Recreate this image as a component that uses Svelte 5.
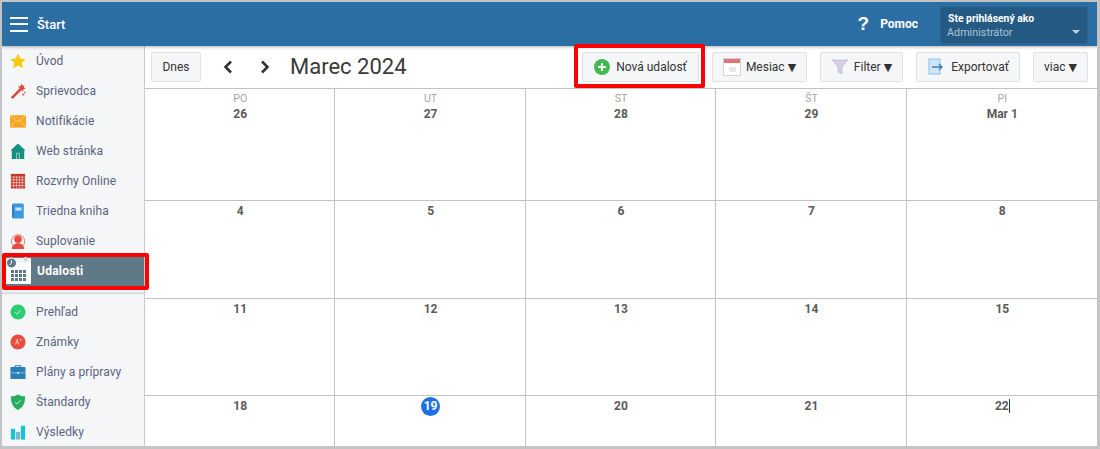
<script>
  const top = [
    { name: 'Úvod', icon: 'star' }, { name: 'Sprievodca', icon: 'wand' }, { name: 'Notifikácie', icon: 'mail' },
    { name: 'Web stránka', icon: 'home' }, { name: 'Rozvrhy Online', icon: 'table' }, { name: 'Triedna kniha', icon: 'book' },
    { name: 'Suplovanie', icon: 'person' }
  ];
  const bottom = [
    { name: 'Prehľad', icon: 'check' }, { name: 'Známky', icon: 'grade' }, { name: 'Plány a prípravy', icon: 'case' },
    { name: 'Štandardy', icon: 'shield' }, { name: 'Výsledky', icon: 'bars' }
  ];
  const days = ['PO', 'UT', 'ST', 'ŠT', 'PI'];
  const weeks = [
    ['26', '27', '28', '29', 'Mar 1'], ['4', '5', '6', '7', '8'],
    ['11', '12', '13', '14', '15'], ['18', '19', '20', '21', '22']
  ];
</script>

{#snippet icon(n)}
  <svg class="ico" viewBox="1 1 18 18" aria-hidden="true">
    {#if n === 'star'}
      <path d="M10 1.500l2.600 5.700 6.100.7-4.500 4.200 1.200 6.100L10 15.200 4.600 18.200l1.200-6.100L1.300 7.900l6.100-.7z" fill="#f6c90e"/>
    {:else if n === 'wand'}
      <path d="M2 17l9.500-9.500 2 2L4 19z" fill="#d9433b"/>
      <path d="M14 1.500l1 2.500 2.500-.5-1 2.500 2 1.500-2.500.5-.5 2.500-2-1.500-2.500.5.700-2.500-1.700-2h2.500z" fill="#e8413a"/>
      <rect x="15" y="13" width="2" height="2" fill="#e8413a"/><rect x="17" y="11" width="1.500" height="1.500" fill="#e8413a"/>
    {:else if n === 'mail'}
      <rect x="1" y="3.500" width="18" height="14" fill="#f5a623"/><path d="M1 3.500l9 7.500 9-7.500M1 17.500l6.500-8.500M19 17.500l-6.500-8.500" fill="none" stroke="#fbd48a" stroke-width="1"/>
    {:else if n === 'home'}
      <path d="M10 1.500l8.500 8H17V19H3V9.500H1.500z" fill="#14917e"/><rect x="8" y="12" width="4" height="7" fill="#9fd4ca"/><rect x="9" y="13" width="2" height="6" fill="#14917e"/>
    {:else if n === 'table'}
      <rect x="2" y="2" width="16" height="16.500" fill="#c0392b"/>
      <path d="M5.200 5v13.500M8.400 5v13.500M11.600 5v13.500M14.800 5v13.500M2 5.500h16M2 8.700h16M2 11.900h16M2 15.100h16" stroke="#f3c9c4" stroke-width=".8"/>
    {:else if n === 'book'}
      <rect x="3.500" y="1.500" width="13" height="17" rx="1.500" fill="#3f97dc"/><rect x="7" y="6" width="7" height="3.500" fill="#c7e2f7"/><rect x="3.500" y="3" width="1.500" height="14" fill="#2272b5"/>
    {:else if n === 'person'}
      <path d="M4 15A7.500 7.500 0 1 1 16 15" fill="none" stroke="#e8685d" stroke-width="1"/><circle cx="10" cy="8" r="4.300" fill="#e74c3c"/><path d="M3 19c0-4 3-6.500 7-6.500s7 2.500 7 6.500z" fill="#e74c3c"/>
    {:else if n === 'check'}
      <circle cx="10" cy="10" r="8.500" fill="#2ecc71"/><path d="M6.800 10.200l2.200 2.200 4-4.400" fill="none" stroke="#c9f3da" stroke-width="1"/>
    {:else if n === 'grade'}
      <circle cx="10" cy="10" r="8.500" fill="#e74c3c"/><path d="M7 13l2-6 2 6M8 11h2M12 7.500h2M13 6.500v2" fill="none" stroke="#f8d2ce" stroke-width=".9"/>
    {:else if n === 'case'}
      <rect x="1.500" y="4.500" width="17" height="13.500" rx="1" fill="#2980b9"/><path d="M7 4.500V3h6v1.500" fill="none" stroke="#2980b9" stroke-width="1.200"/><rect x="1.500" y="10.500" width="17" height="1" fill="#8ec0e0"/><rect x="9" y="10" width="2" height="2" fill="#d5e9f6"/>
    {:else if n === 'shield'}
      <path d="M10 1.500c2.500 1.500 5 2 8 2 0 7-1.500 12-8 15.500C3.500 15.500 2 10.500 2 3.500c3 0 5.500-.5 8-2z" fill="#27ae60"/><path d="M6.800 10l2.200 2.200 4-4.200" fill="none" stroke="#d6f5e3" stroke-width="1"/>
    {:else if n === 'bars'}
      <rect x="2" y="6.500" width="4.800" height="12" fill="#16c2d5"/><rect x="7.600" y="10" width="4.800" height="8.500" fill="#7fb6c9"/><rect x="13.200" y="3" width="4.800" height="15.500" fill="#16c2d5"/>
    {/if}
  </svg>
{/snippet}

<div class="page">
  <header class="topbar">
    <div class="brand">
      <span class="burger"><i></i><i></i><i></i></span>
      <span class="start">Štart</span>
    </div>
    <div class="help"><span class="q">?</span><span>Pomoc</span></div>
    <div class="user">
      <div class="u1">Ste prihlásený ako</div>
      <div class="u2">Administrátor</div>
      <span class="caret"></span>
    </div>
  </header>

  <div class="body">
    <nav class="side">
      <ul class="group">
        {#each top as it}
          <li class="item">{@render icon(it.icon)}<span>{it.name}</span></li>
        {/each}
      </ul>
      <div class="item active">
        <svg class="cal" viewBox="0 0 25 28" aria-hidden="true">
          <rect x="0" y="2" width="25" height="26" fill="#fff"/>
          <rect x="0" y="2" width="25" height="5" fill="#eef0f1"/>
          <rect x="18" y="0" width="3" height="5" rx="1" fill="#c9d2d6"/>
          <g fill="#5f7a86">
            {#each [0, 1, 2, 3] as c}
              {#each [0, 1, 2] as r}
                <rect x={5 + c * 4} y={14 + r * 4} width="3" height="3"/>
              {/each}
            {/each}
          </g>
          <circle cx="5.500" cy="7" r="5" fill="#5f7a86" stroke="#fff" stroke-width="1"/>
          <path d="M5.500 4v3l-2 2" fill="none" stroke="#fff" stroke-width=".9"/>
        </svg>
        <span>Udalosti</span>
      </div>
      <ul class="group second">
        {#each bottom as it}
          <li class="item">{@render icon(it.icon)}<span>{it.name}</span></li>
        {/each}
      </ul>
    </nav>

    <main class="main">
      <div class="toolbar">
        <button class="btn today">Dnes</button>
        <div class="arrows">
          <svg viewBox="0 0 12 14" aria-hidden="true"><path d="M9 1.500L3.500 7 9 12.500" fill="none" stroke="#333" stroke-width="2.600"/></svg>
          <svg viewBox="0 0 12 14" aria-hidden="true"><path d="M3 1.500L8.500 7 3 12.500" fill="none" stroke="#333" stroke-width="2.600"/></svg>
        </div>
        <h1>Marec 2024</h1>
        <div class="actions">
          <button class="btn new">
            <svg class="bi" viewBox="0 0 16 16" aria-hidden="true"><circle cx="8" cy="8" r="8" fill="#3fb950"/><path d="M8 4v8M4 8h8" stroke="#fff" stroke-width="2"/></svg>
            Nová udalosť
          </button>
          <button class="btn month">
            <svg class="bi big" viewBox="0 0 18 18" aria-hidden="true"><rect x=".5" y=".5" width="17" height="17" fill="#fff" stroke="#cfd3d8"/><rect x="1" y="1" width="16" height="4" fill="#e57373"/><path d="M6 9h7v5H6z" fill="#e6e9ed"/></svg>
            Mesiac <b>▼</b>
          </button>
          <button class="btn filter">
            <svg class="bi big" viewBox="0 0 18 18" aria-hidden="true"><path d="M1 2h16l-6 7v7l-4-2V9z" fill="#d7cfe8" stroke="#bdb3d4" stroke-width=".6"/></svg>
            Filter <b>▼</b>
          </button>
          <button class="btn export">
            <svg class="bi big" viewBox="0 0 18 18" aria-hidden="true"><rect x="2" y="1" width="11" height="15" fill="#cfe6f8" stroke="#8dc0e8"/><path d="M5 9h10M12 6l3 3-3 3" fill="none" stroke="#3b82c4" stroke-width="1.300"/></svg>
            Exportovať
          </button>
          <button class="btn more">viac <b>▼</b></button>
        </div>
      </div>

      <div class="grid">
        {#each weeks as week, w}
          {#each week as d, i}
            <div class="cell" class:head={w === 0}>
              {#if w === 0}<div class="dow">{days[i]}</div>{/if}
              <div class="num" class:today-num={d === '19'}>{#if d === '22'}<span class="caretted">{d}</span>{:else}{d}{/if}</div>
            </div>
          {/each}
        {/each}
      </div>
    </main>
  </div>

  <div class="mark mark-side"></div>
  <div class="mark mark-new"></div>
</div>

<style>
  :global(body) { margin: 0; background: #fff; }
  .page {
    position: relative; width: 1100px; height: 449px; box-sizing: border-box; overflow: hidden;
    border-top: 2px solid #c4c4c4; border-left: 2px solid #c4c4c4; border-bottom: 3px solid #c4c4c4; border-right: 3px solid #c4c4c4;
    font-family: Roboto, "Liberation Sans", sans-serif; font-size: 12px; color: #333;
  }
  .topbar {
    height: 44px; background: #2b6ea3; color: #fff; display: flex; align-items: center;
    box-shadow: 0 1px 3px rgba(0,0,0,.3); position: relative; z-index: 1;
  }
  .brand { display: flex; align-items: center; gap: 9px; padding-left: 8px; flex: 1; }
  .burger { display: flex; flex-direction: column; gap: 4.500px; width: 18px; }
  .burger i { display: block; height: 2px; background: #fff; }
  .start { font-size: 13px; font-weight: 500; }
  .help { display: flex; align-items: center; gap: 11px; font-weight: 700; font-size: 12px; margin-right: 23px; }
  .q { font-size: 19px; font-weight: 700; font-family: "Liberation Sans", sans-serif; }
  .user {
    position: relative; width: 146px; height: 35px; margin-right: 10px; box-sizing: border-box;
    background: #255a82; border-radius: 2px; padding: 5px 7px; font-size: 10.400px; line-height: 13px;
    box-shadow: 0 1px 2px rgba(0,0,0,.3);
  }
  .u1 { font-weight: 700; }
  .u2 { color: #a9c5da; font-size: 10.800px; line-height: 15px; margin-left: -1px; }
  .caret { position: absolute; right: 7px; bottom: 8px; border: 4px solid transparent; border-top-color: #b9cede; border-bottom: 0; }

  .body { display: flex; height: 400px; }
  .side { width: 142px; background: #f5f6f8; border-right: 1px solid #c9c9c9; flex: none; }
  .group { list-style: none; margin: 0; padding: 0; }
  .item { display: flex; align-items: center; height: 30px; gap: 10px; padding-left: 8px; color: #5b6381; font-size: 12px; letter-spacing: .08px; }
  .ico { width: 16px; height: 16px; flex: none; }
  .active {
    height: 30px; background: #5f7a86; color: #fff; font-weight: 700; padding-left: 4px; gap: 6px;
    letter-spacing: .25px; position: relative;
  }
  .cal { width: 25px; height: 28px; flex: none; margin-top: -3px; }
  .second { border-top: 2px solid #dcdde0; margin-top: 6px; padding-top: 3px; }

  .main { flex: 1; min-width: 0; display: flex; flex-direction: column; }
  .toolbar {
    height: 43px; flex: none; display: flex; align-items: center; box-sizing: border-box; padding: 0 9px 0 6px;
    border-bottom: 1px solid #c2c2c2;
  }
  .btn {
    font: inherit; font-size: 12px; color: #333; height: 30px; background: #f5f6f8; border: 1px solid #dfe1e5;
    border-radius: 2px; display: flex; align-items: center; justify-content: center; gap: 5px; padding: 0; box-sizing: border-box;
  }
  .btn b { font-size: 11px; font-weight: 400; line-height: 1; font-family: "DejaVu Sans", sans-serif; margin-left: -2px; }
  .today { width: 50px; }
  .arrows { display: flex; gap: 25px; margin-left: 21px; }
  .arrows svg { width: 12px; height: 14px; }
  h1 { margin: -2px 0 0 19px; font-size: 22px; font-weight: 400; color: #3a3a3a; white-space: nowrap; }
  .actions { margin-left: auto; display: flex; align-items: center; gap: 13px; }
  .new { width: 117px; gap: 6px; }
  .month { width: 95px; }
  .filter { width: 83px; }
  .export { width: 104px; gap: 6px; }
  .more { width: 55px; }
  .bi { width: 16px; height: 16px; }
  .bi.big { width: 18px; height: 18px; }

  .grid {
    flex: 1; display: grid; grid-template-columns: repeat(5, 1fr); grid-template-rows: 112px 98px 97px 1fr;
    min-height: 0;
  }
  .cell { border-right: 1px solid #c2c2c2; border-bottom: 1px solid #c2c2c2; text-align: center; padding: 2px 0 0 1px; box-sizing: border-box; min-width: 0; }
  .cell.head { padding-top: 3px; }
  .cell:nth-child(5n) { border-right: 0; }
  .cell:nth-last-child(-n+5) { border-bottom: 0; }
  .dow { color: #a3a3a3; font-size: 10.500px; line-height: 14px; }
  .num { font-weight: 700; color: #5a5a5a; font-size: 12px; line-height: 17px; height: 18px; }
  .today-num {
    width: 19px; height: 19px; line-height: 19px; margin: -1px auto 0; border-radius: 50%; background: #1f6fe0; color: #fff;
  }
  .caretted { border-right: 1px solid #1d3a55; }

  .mark { position: absolute; border: 4px solid #ff0000; box-sizing: border-box; border-radius: 2px; pointer-events: none; z-index: 3; }
  .mark-side { left: 0; top: 251px; width: 147px; height: 37px; }
  .mark-new { left: 572px; top: 42px; width: 131px; height: 44px; }
</style>
